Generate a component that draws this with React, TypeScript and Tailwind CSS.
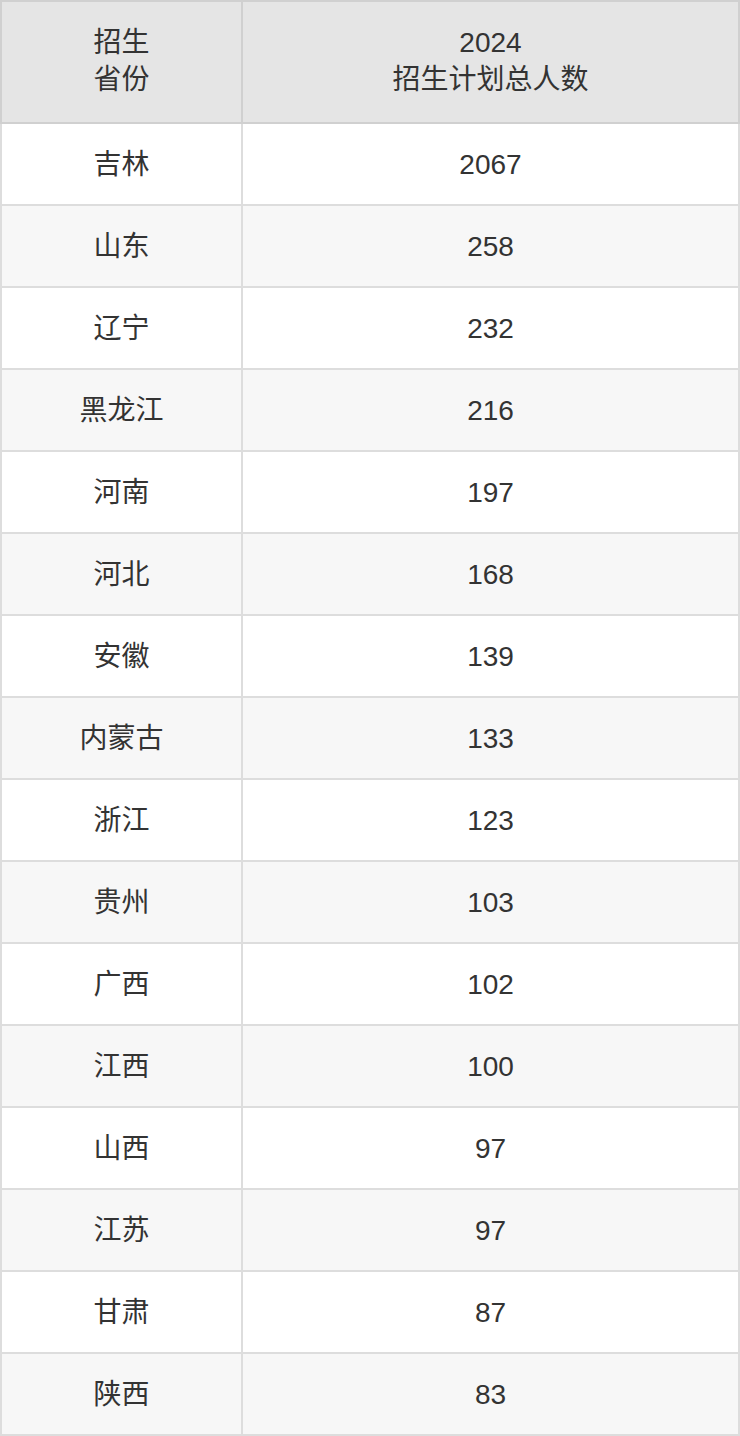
import React from 'react';

// 2024 enrolment plan by province
const rows = [
  { province: '吉林', count: 2067 },
  { province: '山东', count: 258 },
  { province: '辽宁', count: 232 },
  { province: '黑龙江', count: 216 },
  { province: '河南', count: 197 },
  { province: '河北', count: 168 },
  { province: '安徽', count: 139 },
  { province: '内蒙古', count: 133 },
  { province: '浙江', count: 123 },
  { province: '贵州', count: 103 },
  { province: '广西', count: 102 },
  { province: '江西', count: 100 },
  { province: '山西', count: 97 },
  { province: '江苏', count: 97 },
  { province: '甘肃', count: 87 },
  { province: '陕西', count: 83 },
];

const App = () => {
  return (
    <div className="w-[740px] bg-white text-[28px] leading-[37px] text-[#333] font-['Liberation_Sans','Noto_Sans_CJK_SC',sans-serif]">
      <div className="flex h-[124px] border-2 border-[#d0d0d0] bg-[#e5e5e5]">
        <div className="w-[241px] flex items-center justify-center text-center border-r-2 border-[#d0d0d0]">
          <div className="-mt-[2px]">
            招生
            <br />
            省份
          </div>
        </div>
        <div className="flex-1 flex items-center justify-center text-center">
          <div className="-mt-[2px]">
            2024
            <br />
            招生计划总人数
          </div>
        </div>
      </div>
      {rows.map((row, i) => (
        <div
          key={row.province}
          className={`flex h-[82px] border-x-2 border-b-2 border-[#dddddd] ${i % 2 === 1 ? 'bg-[#f7f7f7]' : 'bg-white'}`}
        >
          <div className="w-[241px] flex items-center justify-center border-r-2 border-[#dddddd]">
            {row.province}
          </div>
          <div className="flex-1 flex items-center justify-center">{row.count}</div>
        </div>
      ))}
    </div>
  );
};

export default App;
